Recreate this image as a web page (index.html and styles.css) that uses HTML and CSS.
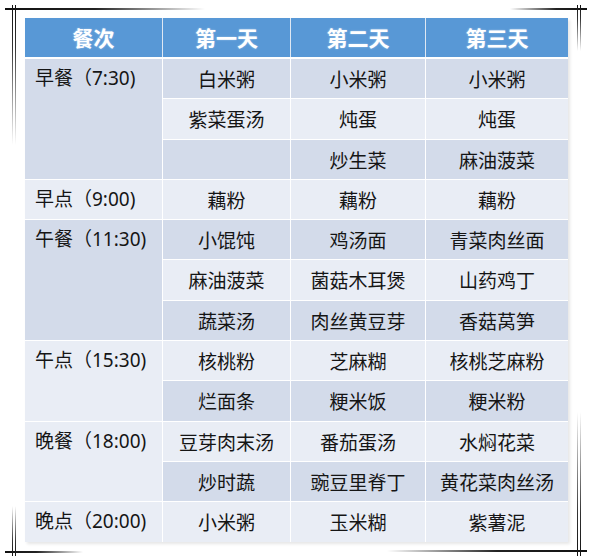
FILE: index.html
```html
<!DOCTYPE html>
<html lang="zh-CN">
<head>
<meta charset="utf-8">
<title>三日食谱</title>
<link rel="stylesheet" href="styles.css">
</head>
<body>
<div class="page">
  <div class="menu">
    <div class="head">
      <div class="hc">餐次</div>
      <div class="hc">第一天</div>
      <div class="hc">第二天</div>
      <div class="hc">第三天</div>
    </div>
    <div class="body">
      <div class="label dark span3">早餐（7:30)</div>
      <div class="c dark">白米粥</div><div class="c dark">小米粥</div><div class="c dark">小米粥</div>
      <div class="c light">紫菜蛋汤</div><div class="c light">炖蛋</div><div class="c light">炖蛋</div>
      <div class="c dark"></div><div class="c dark">炒生菜</div><div class="c dark">麻油菠菜</div>

      <div class="label light">早点（9:00)</div>
      <div class="c light">藕粉</div><div class="c light">藕粉</div><div class="c light">藕粉</div>

      <div class="label dark span3">午餐（11:30)</div>
      <div class="c dark">小馄饨</div><div class="c dark">鸡汤面</div><div class="c dark">青菜肉丝面</div>
      <div class="c light">麻油菠菜</div><div class="c light">菌菇木耳煲</div><div class="c light">山药鸡丁</div>
      <div class="c dark">蔬菜汤</div><div class="c dark">肉丝黄豆芽</div><div class="c dark">香菇莴笋</div>

      <div class="label light span2">午点（15:30)</div>
      <div class="c light">核桃粉</div><div class="c light">芝麻糊</div><div class="c light">核桃芝麻粉</div>
      <div class="c dark">烂面条</div><div class="c dark">粳米饭</div><div class="c dark">粳米粉</div>

      <div class="label light span2">晚餐（18:00)</div>
      <div class="c light">豆芽肉末汤</div><div class="c light">番茄蛋汤</div><div class="c light">水焖花菜</div>
      <div class="c dark">炒时蔬</div><div class="c dark">豌豆里脊丁</div><div class="c dark">黄花菜肉丝汤</div>

      <div class="label light">晚点（20:00)</div>
      <div class="c light">小米粥</div><div class="c light">玉米糊</div><div class="c light">紫薯泥</div>
    </div>
  </div>

  <div class="mark h tl-h"></div>
  <div class="mark v down v-l1 top-v"></div>
  <div class="mark v down v-l2 top-v"></div>

  <div class="mark h tr-h"></div>
  <div class="mark v down v-r1 tr-v"></div>
  <div class="mark v down v-r2 tr-v"></div>

  <div class="mark h bl-h"></div>
  <div class="mark v up v-l1 bl-v"></div>
  <div class="mark v up v-l2 bl-v"></div>

  <div class="mark h br-h"></div>
  <div class="mark v up v-r1 br-v"></div>
  <div class="mark v up v-r2 br-v"></div>
</div>
</body>
</html>
```

FILE: styles.css
```css
html, body {
  margin: 0;
  padding: 0;
  background: #ffffff;
}

.page {
  position: relative;
  width: 592px;
  height: 560px;
  box-sizing: border-box;
  padding: 18px 0 0 25px;
  font-family: "Noto Sans CJK SC", "Noto Sans", sans-serif;
  color: #151515;
  overflow: hidden;
}

.menu {
  width: 543px;
  background: #ffffff;
  box-shadow: 2px 2px 3px rgba(0, 0, 0, 0.10);
}

.head,
.body {
  display: grid;
  grid-template-columns: 137px 127px 134px 142px;
  column-gap: 1px;
  background: #ffffff;
}

.head {
  height: 39px;
  margin-bottom: 2px;
  background: #dfe8f3;
}

.hc {
  background: #5898d6;
  color: #ffffff;
  font-size: 21px;
  font-weight: 700;
  line-height: 39px;
  text-align: center;
  text-shadow: 0 0 2px rgba(255, 255, 255, 0.45);
}

.body {
  grid-template-rows: repeat(12, 39.3px);
  row-gap: 1px;
}

.c {
  font-size: 19px;
  line-height: 39px;
  text-align: center;
  white-space: nowrap;
}

.label {
  font-family: "Noto Sans", "Noto Sans CJK SC", sans-serif;
  font-size: 19px;
  line-height: 39px;
  padding-left: 10px;
  white-space: nowrap;
}

.span2 { grid-row: span 2; }
.span3 { grid-row: span 3; }

.dark { background: #d3dbea; }
.light { background: #e9edf5; }

/* decorative corner frame lines */
.mark {
  position: absolute;
}

.h {
  height: 2px;
}

.v {
  width: 1px;
}

.tl-h {
  left: 5px;
  top: 8px;
  width: 200px;
  background: linear-gradient(to right, #111 0%, #222 45%, rgba(40, 40, 40, 0) 100%);
}

.tr-h {
  left: 510px;
  top: 8px;
  width: 77px;
  background: linear-gradient(to left, #111 0%, #222 40%, rgba(40, 40, 40, 0) 100%);
}

.bl-h {
  left: 5px;
  top: 551px;
  width: 78px;
  background: linear-gradient(to right, #111 0%, #222 40%, rgba(40, 40, 40, 0) 100%);
}

.br-h {
  left: 387px;
  top: 550px;
  width: 200px;
  background: linear-gradient(to left, #111 0%, #222 45%, rgba(40, 40, 40, 0) 100%);
}

.v-l1 { left: 12px; }
.v-l2 { left: 15px; }
.v-r1 { left: 577px; }
.v-r2 { left: 580px; }

.down {
  background: linear-gradient(to bottom, #111 0%, #333 30%, rgba(60, 60, 60, 0) 100%);
}

.up {
  background: linear-gradient(to top, #111 0%, #333 30%, rgba(60, 60, 60, 0) 100%);
}

.top-v { top: 5px; height: 140px; }
.tr-v { top: 5px; height: 46px; }
.bl-v { top: 506px; height: 50px; }
.br-v { top: 412px; height: 144px; }
```
